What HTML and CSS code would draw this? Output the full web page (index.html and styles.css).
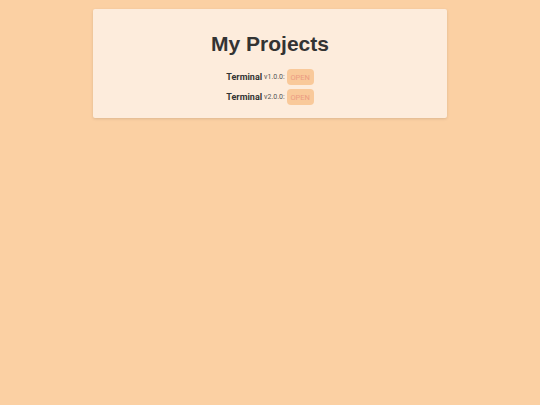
FILE: index.html
```html
<!DOCTYPE html>
<html>
<head>
<meta charset="utf-8">
<link rel="stylesheet" href="styles.css">
</head>
<body>
<div class="card">
  <h1 class="title">My Projects</h1>
  <ul class="list">
    <li class="item"><span class="name">Terminal</span> <span class="ver">v1.0.0:</span> <button class="open">OPEN</button></li>
    <li class="item"><span class="name">Terminal</span> <span class="ver">v2.0.0:</span> <button class="open">OPEN</button></li>
  </ul>
</div>
</body>
</html>
```
FILE: styles.css
```css
html, body { margin: 0; padding: 0; }
body {
  background: #fbd0a3;
  font-family: "Liberation Sans", Arial, sans-serif;
  color: #333;
  min-height: 405px;
  padding-top: 9px;
  box-sizing: border-box;
}
.card {
  width: 354px;
  margin: 0 auto;
  background: #fdecdc;
  border-radius: 2px;
  box-shadow: 0 1px 3px rgba(0,0,0,0.12);
  padding: 22px 0 9px;
  box-sizing: border-box;
  text-align: center;
}
.title {
  margin: 0 0 12px;
  font-size: 21px;
  font-weight: bold;
  line-height: 26px;
  color: #333;
}
.list { list-style: none; margin: 0; padding: 0; }
.item {
  display: flex;
  justify-content: center;
  align-items: center;
  gap: 2px;
  height: 16px;
  margin-bottom: 4px;
  font-family: Roboto, "Liberation Sans", sans-serif;
}
.name { font-weight: bold; font-size: 9px; color: #333; }
.ver { font-size: 7px; color: #555; }
.open {
  font-family: Roboto, "Liberation Sans", sans-serif;
  border: none;
  background: #f9c99a;
  color: #ec9c82;
  font-size: 7.5px;
  height: 16px;
  width: 27px;
  padding: 0;
  border-radius: 4px;
}
```
